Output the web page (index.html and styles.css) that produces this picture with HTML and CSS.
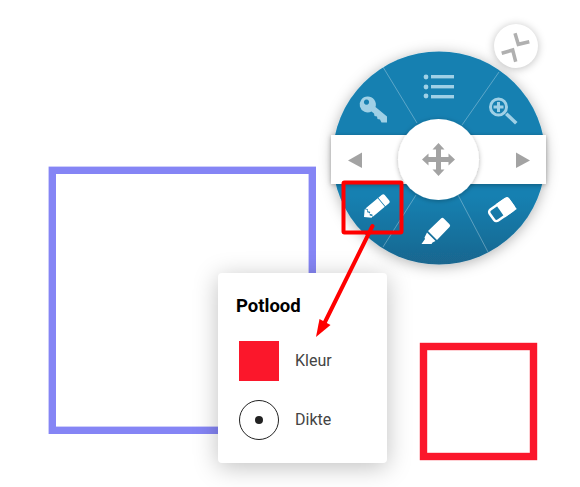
FILE: index.html
```html
<!DOCTYPE html>
<html lang="en">
<head>
  <meta charset="UTF-8">
  <meta name="viewport" content="width=device-width, initial-scale=1.0">
  <title>Potlood</title>
  <link rel="stylesheet" href="styles.css">
</head>
<body>
  <main class="canvas">
    <!-- shapes on the drawing canvas -->
    <svg class="layer" viewBox="0 0 580 487">
      <rect class="shape shape-blue" x="52.300" y="170.300" width="260" height="260"/>
      <rect class="shape shape-red" x="423.500" y="346.500" width="110" height="110"/>
    </svg>

    <section class="panel">
      <h2 class="panel-title">Potlood</h2>
      <div class="panel-row">
        <span class="swatch"></span>
        <span class="panel-label">Kleur</span>
      </div>
      <div class="panel-row">
        <span class="thickness"><span class="thickness-dot"></span></span>
        <span class="panel-label">Dikte</span>
      </div>
    </section>

    <!-- viewBox uses page coordinates -->
    <svg class="wheel" viewBox="310 30 250 250">
      <defs>
        <linearGradient id="wheel-fill" gradientUnits="userSpaceOnUse" x1="439" y1="52" x2="439" y2="265">
          <stop offset="0.68" stop-color="#1580b1"/>
          <stop offset="1" stop-color="#1a668f"/>
        </linearGradient>
        <filter id="soft" x="-30%" y="-30%" width="160%" height="160%">
          <feDropShadow dx="0" dy="2" stdDeviation="7" flood-color="#000" flood-opacity="0.3"/>
        </filter>
        <filter id="soft-small" x="-30%" y="-30%" width="160%" height="160%">
          <feDropShadow dx="0" dy="1" stdDeviation="2.500" flood-color="#000" flood-opacity="0.3"/>
        </filter>
      </defs>

      <circle cx="439" cy="158" r="106.500" fill="url(#wheel-fill)" filter="url(#soft)"/>
      <g class="wheel-lines">
        <path d="M383 67 417 123"/>
        <path d="M499 72 462 125"/>
        <path d="M383 247 416 195"/>
        <path d="M488 252 458 195"/>
      </g>

      <!-- key -->
      <g class="icon-light">
        <path fill-rule="evenodd" d="M367.500 96.500a8 8 0 0 1 8 10.500l11.500 9.500v6h-5.500l-1.500-3-2.500-.500-.500-2.500-2.500-.500-.500-2.500-2.500-2a8 8 0 1 1-4-15zm-1 3a2.600 2.600 0 1 0 .01 0z"/>
      </g>
      <!-- list -->
      <g class="icon-light">
        <circle cx="426" cy="77" r="2.400"/>
        <circle cx="426" cy="87" r="2.400"/>
        <circle cx="426" cy="96" r="2.400"/>
        <rect x="431" y="75" width="23" height="3.400"/>
        <rect x="431" y="85" width="23" height="3.400"/>
        <rect x="431" y="95" width="23" height="3.400"/>
      </g>
      <!-- zoom in -->
      <g class="icon-light">
        <path fill-rule="evenodd" d="M498.500 97.500a9.500 9.500 0 1 1 0 19 9.500 9.500 0 0 1 0-19zm0 3a6.500 6.500 0 1 0 .01 0z"/>
        <path d="M497 102h3v3.500h3.500v3h-3.500v3.500h-3v-3.500h-3.500v-3h3.500z"/>
        <path d="M505 115l2.500-2.500 10 9.500-2.500 2.500z"/>
      </g>

      <!-- pencil -->
      <g class="icon-white" transform="translate(364 217) rotate(-40)">
        <path d="M0 0l5.500-5.500 1.500 2-1.500 2 1.500 2-1.500 2 1.500 2-1.500 1z"/>
        <path d="M6.500 -5.500h16v11h-16l1.500-2-1.500-2 1.500-1.500-1.500-2 1.500-1.500z"/>
        <path d="M23.300 -5.500h4.700a2 2 0 0 1 2 2v7a2 2 0 0 1-2 2h-4.700z"/>
      </g>
      <!-- highlighter -->
      <path class="icon-white" d="M441 218.500a2 2 0 0 1 2.800 0l5.700 5.700a2 2 0 0 1 0 2.800l-12.500 13-9-9zM427 232.500l8.500 8.500-3 1.500-1 1.500h-10l3.500-5-.5-1.500z"/>
      <!-- eraser -->
      <g transform="rotate(-35 501.500 210)">
        <rect class="icon-outline" x="489.750" y="203.250" width="23.500" height="13.500" rx="3"/>
        <path class="icon-white" d="M500 202h11.500a3 3 0 0 1 3 3v13h-14.500z"/>
      </g>

      <rect class="band" x="331" y="135" width="215" height="49" filter="url(#soft-small)"/>
      <path class="icon-grey" d="M348 160.500l14-8v15.500z"/>
      <path class="icon-grey" d="M530 160.500l-14-8v15.500z"/>

      <circle cx="438.500" cy="159.500" r="40.500" fill="#fff" filter="url(#soft-small)"/>
      <!-- move -->
      <path class="icon-grey" d="M438.500 143l6 6.500h-3.500v7.500h7.500v-3.500l6.500 6-6.500 6v-3.500h-7.500v7.500h3.500l-6 6.500-6-6.500h3.500v-7.500h-7.500v3.500l-6.500-6 6.500-6v3.500h7.500v-7.500h-3.500z"/>
    </svg>

    <button class="collapse" type="button">
      <svg viewBox="0 0 44 44" width="44" height="44">
        <path d="M21 9.300l3.300 11 11-2.600"/>
        <path d="M7.700 29.300l11-3.300 3 11.700"/>
      </svg>
    </button>

    <!-- red note drawn on top of the screenshot -->
    <svg class="layer" viewBox="0 0 580 487">
      <rect x="343.500" y="182.500" width="58" height="50" rx="1" fill="none" stroke="#f00" stroke-width="4"/>
      <path d="M372.500 226 325 322" fill="none" stroke="#f00" stroke-width="4" stroke-linecap="round"/>
      <path d="M316 337l3.500-18 11 6z" fill="#f00"/>
    </svg>
  </main>
</body>
</html>
```

FILE: styles.css
```css
body {
  margin: 0;
  background: #fff;
  font-family: Roboto, Arial, sans-serif;
  overflow: hidden;
}
.canvas {
  position: relative;
  width: 580px;
  height: 487px;
  overflow: hidden;
}
.layer {
  position: absolute;
  left: 0;
  top: 0;
  width: 580px;
  height: 487px;
  pointer-events: none;
}
.shape {
  fill: none;
  stroke-width: 7.400;
}
.shape-blue {
  stroke: #8585f5;
}
.shape-red {
  stroke: #fb172b;
}
.panel {
  position: absolute;
  left: 218px;
  top: 273px;
  box-sizing: border-box;
  width: 169px;
  height: 190px;
  padding: 22px 21px 0;
  background: #fff;
  border-radius: 4px;
  box-shadow: 0 4px 24px rgba(0, 0, 0, 0.25);
}
.panel-title {
  margin: 0 0 24px -3px;
  font-size: 18.500px;
  line-height: 22px;
  font-weight: 700;
  color: #000;
}
.panel-row {
  display: flex;
  align-items: center;
  gap: 16px;
  margin-bottom: 19px;
}
.panel-label {
  margin-top: -2px;
  font-size: 16px;
  color: #444;
}
.swatch {
  width: 40px;
  height: 40px;
  background: #fb172b;
}
.thickness {
  display: flex;
  align-items: center;
  justify-content: center;
  box-sizing: border-box;
  width: 40px;
  height: 40px;
  border: 1px solid #222;
  border-radius: 50%;
}
.thickness-dot {
  width: 8px;
  height: 8px;
  background: #222;
  border-radius: 50%;
}
.wheel {
  position: absolute;
  left: 310px;
  top: 30px;
  width: 250px;
  height: 250px;
}
.wheel-lines path {
  fill: none;
  stroke: rgba(255, 255, 255, 0.3);
  stroke-width: 1;
}
.icon-light {
  fill: #9fd0e6;
}
.icon-white {
  fill: #fff;
}
.icon-outline {
  fill: none;
  stroke: #fff;
  stroke-width: 2.500;
}
.icon-grey {
  fill: #a3a3a3;
}
.band {
  fill: #fff;
}
.collapse {
  position: absolute;
  left: 494px;
  top: 24px;
  width: 44px;
  height: 44px;
  padding: 0;
  border: none;
  border-radius: 50%;
  background: #fff;
  box-shadow: 0 1px 8px rgba(0, 0, 0, 0.25);
}
.collapse svg {
  display: block;
}
.collapse path {
  fill: none;
  stroke: #b0b0b0;
  stroke-width: 3.500;
}
```
